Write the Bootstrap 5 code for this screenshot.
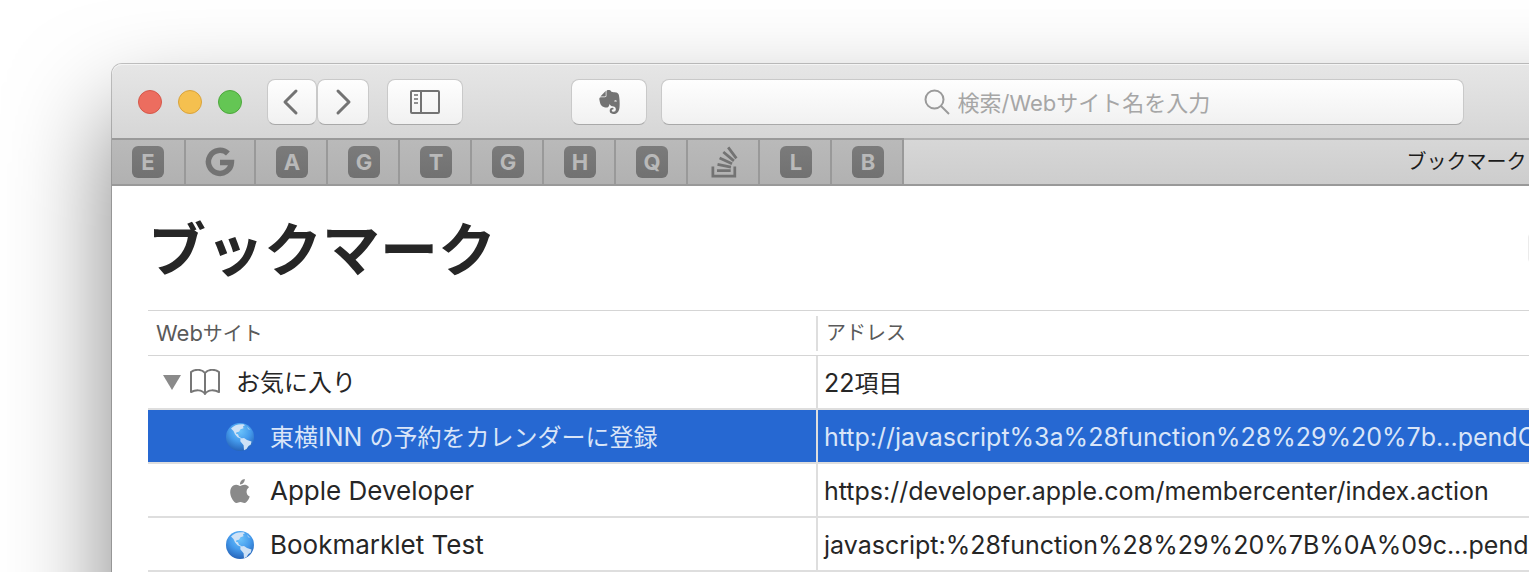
<!DOCTYPE html>
<html lang="ja">
<head>
<meta charset="utf-8">
<meta name="viewport" content="width=device-width, initial-scale=1">
<title>ブックマーク</title>
<link rel="stylesheet" href="https://cdn.jsdelivr.net/npm/bootstrap@5.3.0/dist/css/bootstrap.min.css">
<style>
  body { font-family: Inter, "Noto Sans CJK JP", sans-serif; color: #262626; background: #fff; }
  /* The window runs past the right and bottom edges of the page. */
  .browser { margin: 64px -500px 0 112px; min-height: 130vh; background: #fff; border-radius: 10px;
    box-shadow: 0 0 0 1px rgba(0,0,0,.22), 0 50px 100px rgba(0,0,0,.5); }
  .toolbar { height: 74px; padding: 2px 565px 0 26px; border-radius: 10px 10px 0 0;
    background: linear-gradient(#e6e6e6, #d6d6d6); box-shadow: inset 0 1px #f4f4f4; }
  .light { width: 24px; height: 24px; padding: 0; border-radius: 50%; border: 1px solid; }
  .light-close { background: #ec6d5f; border-color: #d5584a; }
  .light-min { background: #f5c04f; border-color: #d9a33b; }
  .light-max { background: #64c654; border-color: #4da83c; }
  .tool { height: 46px; padding: 0; border: 1px solid #c9c9c9; border-bottom-color: #a9a9a9; border-radius: 8px;
    background: linear-gradient(#fefefe, #f1f1f1); color: #737373; }
  .tool-back { width: 50px; }
  .tool-forward { width: 52px; }
  .tool-wide { width: 76px; }
  .history { margin: 0 18px 0 25px; }
  .extension { margin: 0 14px 0 108px; }
  .tool svg, .pin svg, .page-list svg { display: block; flex: none; }
  .address { padding: 0 0 0 14px; }
  .address input { width: 258px; padding: 2px 0 0; font-size: 22px; line-height: 32px; background: none; outline: 0; }
  .address input::placeholder { color: #a6a6a6; opacity: 1; }
  .tabs { height: 48px; border-bottom: 2px solid #999; background: linear-gradient(#bababa, #b1b1b1); }
  .pin { width: 72px; padding: 0 0 0 2px; border: 0; border-top: 2px solid #999; border-right: 2px solid #999; background: none; color: #737373; }
  .pin-first { width: 74px; padding: 0; }
  .pin-google { width: 70px; padding: 0; }
  .initial { width: 32px; height: 32px; border-radius: 6px; background: linear-gradient(#7b7b7b, #717171); color: #b9b9b9;
    font-size: 22px; line-height: 32px; font-weight: 700; }
  .tab-current { border: 0; border-top: 2px solid #b1b1b1; background: linear-gradient(#d7d7d7, #cdcdcd);
    font-size: 20px; line-height: 40px; color: #1c1c1c; }
  .heading-row { height: 124px; padding: 0 36px; }
  .heading-row h1 { padding-top: 4px; font-size: 58px; line-height: 80px; font-weight: 700; }
  .list-search { width: 465px; height: 30px; border: 1px solid #ebebeb; border-radius: 4px; }
  .page-list { margin-left: 36px; width: calc(100% - 36px); table-layout: fixed; border-collapse: separate; border-spacing: 0; }
  .page-list th { height: 46px; padding: 0 8px; border-top: 1px solid #d5d5d5; border-bottom: 1px solid #d5d5d5;
    font-weight: 400; font-size: 20px; line-height: 30px; color: #5a5a5a; }
  .page-list th:first-child { width: 668px; }
  .page-list th + th { padding-left: 10px; background: linear-gradient(#dedede, #dedede) left center / 2px 35px no-repeat; }
  .page-list td { height: 54px; padding: 2px 6px 0; border-bottom: 2px solid #dedede; font-size: 24px; line-height: 36px; white-space: nowrap; }
  .page-list td + td { border-left: 2px solid #dedede; }
  .page-list .web { font-size: 25px; }
  .page-list .site { font-size: 26px; }
  .web-head { font-size: 22px; }
  .picked { background: #2668d2; color: #d9e5f8; }
  .entry { padding-left: 72px; gap: 16px; }
  .folder { padding-left: 8px; }
</style>
</head>
<body class="vh-100 overflow-hidden">
<svg class="position-absolute" width="0" height="0" aria-hidden="true">
  <defs>
    <radialGradient id="sea" cx="0.5" cy="0.28" r="0.75">
      <stop offset="0" stop-color="#6cc4fb"/><stop offset="0.5" stop-color="#459bec"/><stop offset="1" stop-color="#2460b5"/>
    </radialGradient>
    <symbol id="globe" viewBox="0 0 28 28">
      <circle cx="14" cy="14" r="14" fill="url(#sea)"/>
      <g fill="#cfe2f6">
        <path d="M5 5.500C8 2 12 .8 17.500 1.200l1.500 1-2 1 .5 2-3 1-1.500 2.500-2.500.5-.5 1.500 2 .5 1 2.500 3 1.800-1 .3-3.500-1.600-2.500-3L7.500 8z"/>
        <path d="M14.500 15.600l3.500-.6 3 2 4.500 1.500-.7 3-2.300 1.500-2 3-2.500 1.200-.4-5-3.300-4z"/>
        <path d="M21 3.500l3.500 3.500-2.500-.8z" opacity=".6"/>
      </g>
    </symbol>
  </defs>
</svg>
<div class="browser">
  <header class="toolbar d-flex align-items-center">
    <div class="d-flex gap-3">
      <button class="light light-close" type="button" aria-label="閉じる"></button>
      <button class="light light-min" type="button" aria-label="しまう"></button>
      <button class="light light-max" type="button" aria-label="拡大"></button>
    </div>
    <div class="history d-flex">
      <button class="tool tool-back d-flex align-items-center justify-content-center" type="button" aria-label="戻る">
        <svg width="24" height="28" viewBox="0 0 24 28" fill="none" stroke="currentColor" stroke-width="3" stroke-linecap="round" stroke-linejoin="round"><path d="M16 3 5 14 16 25"/></svg>
      </button>
      <button class="tool tool-forward d-flex align-items-center justify-content-center" type="button" aria-label="進む">
        <svg width="24" height="28" viewBox="0 0 24 28" fill="none" stroke="currentColor" stroke-width="3" stroke-linecap="round" stroke-linejoin="round"><path d="M7 3 18 14 7 25"/></svg>
      </button>
    </div>
    <button class="tool tool-wide d-flex align-items-center justify-content-center" type="button" aria-label="サイドバー">
      <svg width="30" height="24" viewBox="0 0 30 24" fill="none" stroke="currentColor" stroke-width="2"><rect x="1" y="1" width="28" height="22" rx="1"/><path d="M11 1v22"/><path d="M4 5h4M4 9h4M4 13h4" stroke="#909090"/></svg>
    </button>
    <button class="tool tool-wide extension d-flex align-items-center justify-content-center" type="button" aria-label="Evernote">
      <svg width="21" height="24" viewBox="1.500 0 21 24" fill="currentColor"><path d="M8.222 5.393c0 .239-.02.637-.256.895-.257.24-.652.259-.888.259H4.552c-.73 0-1.165 0-1.460.04-.159.02-.356.1-.455.14-.04.019-.04 0-.02-.02L8.380.796c.02-.02.04-.02.02.02-.04.099-.118.298-.138.457-.04.298-.04.736-.04 1.472v2.647zm5.348 17.869c-.67-.438-1.026-1.015-1.164-1.373a2.924 2.924 0 01-.217-1.095 3.007 3.007 0 013-3.004c.493 0 .888.398.888.895a.88.88 0 01-.454.776c-.099.06-.237.1-.336.12-.098.02-.473.06-.65.218-.198.16-.356.418-.356.697 0 .298.118.577.316.776.355.358.829.557 1.342.557a2.436 2.436 0 002.427-2.447c0-1.214-.809-2.290-1.875-2.766-.158-.08-.414-.14-.651-.2a8.040 8.040 0 00-.592-.1c-.829-.1-2.901-.755-3.040-2.605 0 0-.611 2.785-1.835 3.540-.118.06-.276.12-.454.16-.177.04-.374.06-.434.06-1.993.12-4.105-.517-5.565-2.030 0 0-.987-.815-1.500-3.103-.118-.558-.355-1.553-.493-2.488-.06-.338-.08-.597-.099-.836 0-.975.592-1.631 1.342-1.730h4.026c.69 0 1.086-.18 1.342-.42.336-.317.415-.775.415-1.312V1.354C9.050.617 9.703 0 10.669 0h.474c.197 0 .434.02.651.04.158.02.296.06.533.12 1.204.298 1.460 1.532 1.460 1.532s2.270.398 3.415.597c1.085.199 3.770.378 4.282 3.104 1.204 6.487.474 12.775.415 12.775-.849 6.129-5.901 5.830-5.901 5.830a4.100 4.100 0 01-2.428-.736zm4.540-13.034c-.652-.06-1.204.2-1.402.697-.04.1-.079.219-.059.278.02.06.06.08.099.1.237.12.631.179 1.204.239.572.06.967.1 1.223.06.04 0 .08-.02.119-.08.04-.06.02-.18.02-.28-.06-.536-.553-.934-1.204-1.014z"/></svg>
    </button>
    <label class="tool address flex-grow-1 d-flex align-items-center justify-content-center gap-2">
      <svg width="26" height="26" viewBox="0 0 26 26" fill="none" stroke="#9a9a9a" stroke-width="2"><circle cx="10.500" cy="10.500" r="9"/><path d="m17 17 8 8"/></svg>
      <input class="border-0" type="text" placeholder="検索/Webサイト名を入力" aria-label="検索/Webサイト名を入力">
    </label>
  </header>

  <nav class="tabs d-flex" aria-label="タブ">
    <button class="pin pin-first d-flex align-items-center justify-content-center" type="button"><span class="initial">E</span></button>
    <button class="pin pin-google d-flex align-items-center justify-content-center" type="button" aria-label="Google">
      <svg width="30" height="30" viewBox="0 0 30 30" fill="none" stroke="currentColor" stroke-width="5.500"><path d="M22.900 6.600A11.500 11.500 0 1 0 26.400 15.500H15"/></svg>
    </button>
    <button class="pin d-flex align-items-center justify-content-center" type="button"><span class="initial">A</span></button>
    <button class="pin d-flex align-items-center justify-content-center" type="button"><span class="initial">G</span></button>
    <button class="pin d-flex align-items-center justify-content-center" type="button"><span class="initial">T</span></button>
    <button class="pin d-flex align-items-center justify-content-center" type="button"><span class="initial">G</span></button>
    <button class="pin d-flex align-items-center justify-content-center" type="button"><span class="initial">H</span></button>
    <button class="pin d-flex align-items-center justify-content-center" type="button"><span class="initial">Q</span></button>
    <button class="pin d-flex align-items-center justify-content-center" type="button" aria-label="Stack Overflow">
      <svg width="27" height="32" viewBox="1.500 0 21 24" fill="currentColor"><path d="M15.725 0l-1.720 1.277 6.390 8.588 1.716-1.277L15.725 0zm-3.940 3.418l-1.369 1.644 8.225 6.850 1.369-1.644-8.225-6.850zm-3.150 4.465l-.905 1.940 9.702 4.517.904-1.940-9.701-4.517zm-1.850 4.860l-.44 2.093 10.473 2.201.44-2.092-10.473-2.203zM1.890 15.470V24h19.190v-8.530h-2.133v6.397H4.021v-6.396H1.890zm4.265 2.133v2.130h10.660v-2.130H6.154Z"/></svg>
    </button>
    <button class="pin d-flex align-items-center justify-content-center" type="button"><span class="initial">L</span></button>
    <button class="pin d-flex align-items-center justify-content-center" type="button"><span class="initial">B</span></button>
    <button class="tab-current flex-grow-1 p-0 text-center" type="button">ブックマーク</button>
  </nav>

  <main>
    <div class="heading-row d-flex align-items-center justify-content-between">
      <h1 class="m-0">ブックマーク</h1>
      <input class="list-search" type="search" aria-label="ブックマークを検索">
    </div>
    <table class="page-list">
      <thead>
        <tr><th scope="col"><span class="web-head">Web</span>サイト</th><th scope="col">アドレス</th></tr>
      </thead>
      <tbody>
        <tr>
          <td><div class="folder d-flex align-items-center">
            <svg width="20" height="16" viewBox="0 0 20 16"><path d="M1 0h18L10 15z" fill="#8a8a8a"/></svg>
            <svg class="ms-2 me-3" width="30" height="28" viewBox="0 0 30 28" fill="none" stroke="#777" stroke-width="2" stroke-linejoin="round"><path d="M15 4C12 0 5 0 1 3v20c4-2 11-3 14 2 3-5 10-4 14-2V3C25 0 18 0 15 4zv21"/></svg>
            <span>お気に入り</span></div></td>
          <td><span class="web">22</span>項目</td>
        </tr>
        <tr class="picked">
          <td><div class="entry d-flex align-items-center">
            <svg width="28" height="28"><use href="#globe"/></svg>
            <span>東横<span class="web">INN </span>の予約をカレンダーに登録</span></div></td>
          <td class="web">http://javascript%3a%28function%28%29%20%7b...pendChild</td>
        </tr>
        <tr>
          <td class="site"><div class="entry d-flex align-items-center">
            <svg width="28" height="26" viewBox="-2 -1 28 26" fill="#8a8a8a"><path d="M12.152 6.896c-.948 0-2.415-1.078-3.960-1.040-2.040.027-3.910 1.183-4.961 3.014-2.117 3.675-.546 9.103 1.519 12.090 1.013 1.454 2.208 3.090 3.792 3.039 1.520-.065 2.090-.987 3.935-.987 1.831 0 2.350.987 3.960.948 1.637-.026 2.676-1.480 3.676-2.948 1.156-1.688 1.636-3.325 1.662-3.415-.039-.013-3.182-1.221-3.220-4.857-.026-3.040 2.480-4.494 2.597-4.559-1.429-2.090-3.623-2.324-4.390-2.376-2-.156-3.675 1.090-4.610 1.090zM15.530 3.830c.843-1.012 1.400-2.427 1.245-3.830-1.207.052-2.662.805-3.532 1.818-.78.896-1.454 2.338-1.273 3.714 1.338.104 2.715-.688 3.559-1.701"/></svg>
            <span>Apple Developer</span></div></td>
          <td class="web">https://developer.apple.com/membercenter/index.action</td>
        </tr>
        <tr>
          <td class="site"><div class="entry d-flex align-items-center">
            <svg width="28" height="28"><use href="#globe"/></svg>
            <span>Bookmarklet Test</span></div></td>
          <td class="web">javascript:%28function%28%29%20%7B%0A%09c...pendChild</td>
        </tr>
      </tbody>
    </table>
  </main>
</div>
<script src="https://cdn.jsdelivr.net/npm/bootstrap@5.3.0/dist/js/bootstrap.bundle.min.js"></script>
</body>
</html>
